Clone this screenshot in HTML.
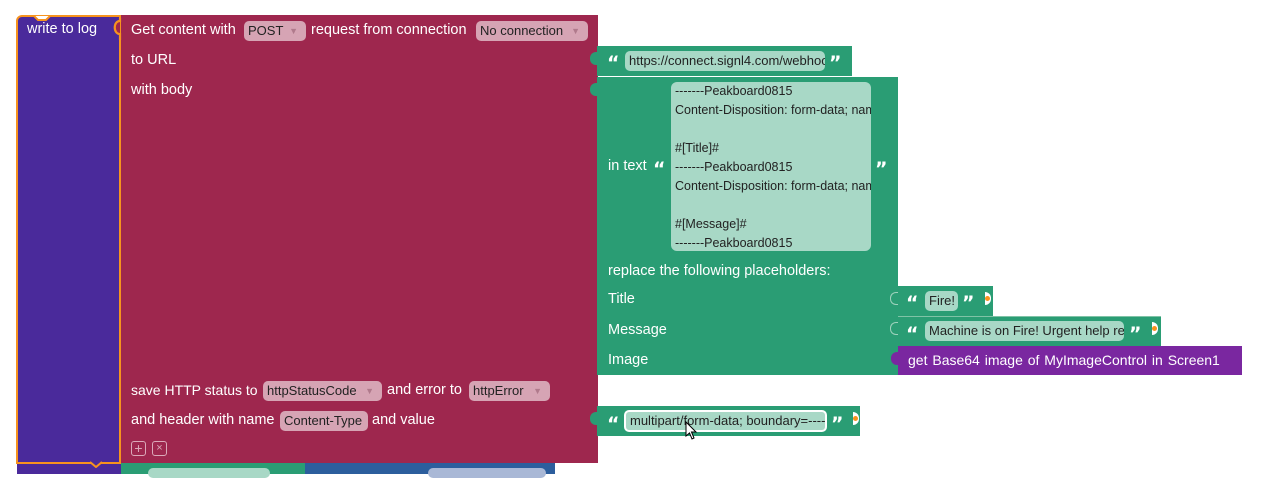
<!DOCTYPE html>
<html><head><meta charset="utf-8"><style>
*{margin:0;padding:0;box-sizing:border-box}
body{width:1261px;height:474px;background:#fff;position:relative;overflow:hidden;font-family:"Liberation Sans",sans-serif;font-size:14.5px;color:#fff}
.a{position:absolute}
.t{position:absolute;white-space:nowrap;line-height:18px}
.pf{position:absolute;background:#d6a4b4;color:#222;border-radius:5px;height:20px;line-height:20px;font-size:13px;padding-left:4px;white-space:nowrap}
.pf .ar{position:absolute;right:8px;top:0;color:#b07a8c;font-size:9px}
.gf{position:absolute;background:#a8d8c6;color:#222;border-radius:5px;height:20px;line-height:20px;font-size:13px;padding-left:4px;white-space:nowrap;overflow:hidden}
.q{position:absolute;font-family:"DejaVu Sans","Liberation Sans",sans-serif;font-weight:bold;font-size:19px;line-height:20px;color:#fff;letter-spacing:-1px}
.dot{position:absolute;width:6px;height:13px;border-radius:0 6px 6px 0;background:#fff}
.dot::after{content:"";position:absolute;left:0;top:4px;width:5px;height:5px;border-radius:50%;background:#f7931e}
</style></head><body>
<div class="a" style="left:17px;top:463px;width:104px;height:11px;background:#4a2a9b"></div>
<div class="a" style="left:121px;top:463px;width:184px;height:11px;background:#2a9d74"></div>
<div class="a" style="left:148px;top:468px;width:122px;height:10px;background:#a8d8c6;border-radius:5px"></div>
<div class="a" style="left:305px;top:463px;width:250px;height:11px;background:#2c5e9d"></div>
<div class="a" style="left:428px;top:468px;width:118px;height:10px;background:#a9b8d6;border-radius:5px"></div>
<div class="a" style="left:120px;top:15px;width:478px;height:448px;background:#9e274e"></div>
<div class="a" style="left:16px;top:15px;width:105px;height:449px;background:#4a2a9b;border:2px solid #f7931e;border-radius:6px 0 0 0"></div>
<svg class="a" style="left:28px;top:13px" width="30" height="8"><path d="M0 3 L6 3 L10 7 L18 7 L22 3 L30 3" fill="#fff" stroke="#f7931e" stroke-width="2"/></svg>
<svg class="a" style="left:90px;top:458px" width="24" height="10"><path d="M0 4 L6 9 L12 4" fill="#4a2a9b" stroke="#f7931e" stroke-width="2"/></svg>
<svg class="a" style="left:110px;top:18px" width="14" height="22"><path d="M10 0 L10 3 C3 3 3 16 10 16 L10 22" fill="#9e274e" stroke="#f7931e" stroke-width="2.2"/></svg>
<div class="t" style="left:27px;top:20px">write to log</div>
<div class="t" style="left:131px;top:21px">Get content with</div>
<div class="pf" style="left:244px;top:21px;width:62px">POST<span class="ar">▼</span></div>
<div class="t" style="left:311px;top:21px">request from connection</div>
<div class="pf" style="left:476px;top:21px;width:112px">No connection<span class="ar">▼</span></div>
<div class="t" style="left:131px;top:51px">to URL</div>
<div class="t" style="left:131px;top:81px">with body</div>
<div class="t" style="left:131px;top:381px;font-size:14px">save HTTP status to</div>
<div class="pf" style="left:263px;top:381px;width:119px">httpStatusCode<span class="ar">▼</span></div>
<div class="t" style="left:387px;top:381px">and error to</div>
<div class="pf" style="left:469px;top:381px;width:81px">httpError<span class="ar">▼</span></div>
<div class="t" style="left:131px;top:411px">and header with name</div>
<div class="pf" style="left:280px;top:411px;width:88px">Content-Type</div>
<div class="t" style="left:372px;top:411px">and value</div>
<div class="a" style="left:131px;top:441px;width:15px;height:15px;border:1px solid #dba9b9;border-radius:3px;color:#dba9b9;font-size:14px;line-height:12px;text-align:center">+</div>
<div class="a" style="left:152px;top:441px;width:15px;height:15px;border:1px solid #dba9b9;border-radius:3px;color:#dba9b9;font-size:11px;line-height:12px;text-align:center">×</div>
<div class="a" style="left:597px;top:46px;width:255px;height:30px;background:#2a9d74"></div>
<div class="q" style="left:607px;top:53px">“</div>
<div class="gf" style="left:625px;top:51px;width:200px">https://connect.signl4.com/webhook</div>
<div class="q" style="left:829px;top:53px">”</div>
<div class="a" style="left:597px;top:77px;width:301px;height:298px;background:#2a9d74"></div>
<div class="a" style="left:590px;top:52px;width:8px;height:13px;border-radius:6px 0 0 6px;background:#2a9d74"></div>
<div class="a" style="left:590px;top:83px;width:8px;height:13px;border-radius:6px 0 0 6px;background:#2a9d74"></div>
<div class="t" style="left:608px;top:157px">in text</div>
<div class="q" style="left:653px;top:159px">“</div>
<div class="a" style="left:671px;top:82px;width:200px;height:169px;background:#a8d8c6;border-radius:6px;color:#222;font-size:12.5px;line-height:19px;padding:0 0 0 4px;overflow:hidden;white-space:pre">-------Peakboard0815
Content-Disposition: form-data; name

#[Title]#
-------Peakboard0815
Content-Disposition: form-data; name

#[Message]#
-------Peakboard0815</div>
<div class="q" style="left:875px;top:159px">”</div>
<div class="t" style="left:608px;top:262px">replace the following placeholders:</div>
<div class="t" style="left:608px;top:290px">Title</div>
<div class="t" style="left:608px;top:321px">Message</div>
<div class="t" style="left:608px;top:351px">Image</div>
<div class="a" style="left:898px;top:286px;width:95px;height:30px;background:#2a9d74"></div>
<div class="a" style="left:890px;top:292px;width:8px;height:13px;border:1px solid #9fd2bd;border-right:none;border-radius:6px 0 0 6px"></div>
<div class="q" style="left:906px;top:293px">“</div>
<div class="gf" style="left:925px;top:291px;width:33px">Fire!</div>
<div class="q" style="left:962px;top:293px">”</div>
<div class="dot" style="left:985px;top:292px"></div>
<div class="a" style="left:898px;top:316px;width:263px;height:30px;background:#2a9d74;border-top:1px solid #7fc3a6"></div>
<div class="a" style="left:890px;top:322px;width:8px;height:13px;border:1px solid #9fd2bd;border-right:none;border-radius:6px 0 0 6px"></div>
<div class="q" style="left:906px;top:324px">“</div>
<div class="gf" style="left:925px;top:321px;width:199px">Machine is on Fire! Urgent help required</div>
<div class="q" style="left:1129px;top:324px">”</div>
<div class="dot" style="left:1152px;top:322px"></div>
<div class="a" style="left:898px;top:346px;width:344px;height:29px;background:#7a27a0"></div>
<div class="a" style="left:891px;top:352px;width:8px;height:13px;border-radius:6px 0 0 6px;background:#7a27a0"></div>
<div class="t" style="left:908px;top:351px;font-size:14px;word-spacing:1px">get Base64 image of MyImageControl in Screen1</div>
<div class="a" style="left:597px;top:406px;width:263px;height:30px;background:#2a9d74"></div>
<div class="a" style="left:590px;top:412px;width:8px;height:13px;border-radius:6px 0 0 6px;background:#2a9d74"></div>
<div class="q" style="left:607px;top:414px">“</div>
<div class="gf" style="left:624px;top:410px;width:203px;height:22px;border:2px solid #fff;line-height:18px">multipart/form-data; boundary=-----</div>
<div class="q" style="left:831px;top:414px">”</div>
<div class="dot" style="left:853px;top:412px"></div>
<svg class="a" style="left:685px;top:421px" width="14" height="20"><path d="M1 1 L1 15 L4.5 12 L7 18 L9 17 L6.5 11 L11 11 Z" fill="#fff" stroke="#000" stroke-width="1"/></svg>
</body></html>
